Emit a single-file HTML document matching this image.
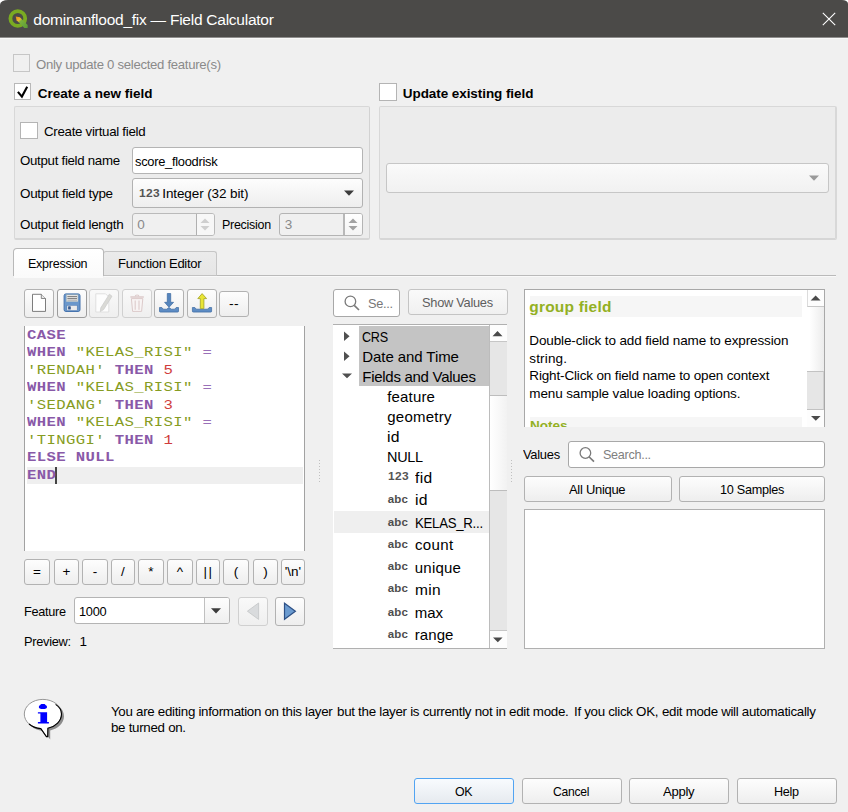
<!DOCTYPE html>
<html>
<head>
<meta charset="utf-8">
<title>Field Calculator</title>
<style>
*{box-sizing:border-box;margin:0;padding:0}
html,body{width:848px;height:812px;overflow:hidden;background:#f0f0f0}
body{font-family:"Liberation Sans",sans-serif;font-size:13px;color:#000;position:relative}
.a{position:absolute}
.t{position:absolute;white-space:pre;line-height:20px;height:20px;transform-origin:0 0}
svg{position:absolute;overflow:visible}
.cb{position:absolute;width:17px;height:17px;background:#fff;border:1px solid #b8b8b8}
.cb.dis{background:#f0f0f0;border-color:#c6c6c6}
.gb{position:absolute;border:1px solid #d8d8d8;border-bottom:2px solid #d6d6d6;border-right-color:#d2d2d2;background:#ececec;border-radius:2px}
.inp{position:absolute;background:#fff;border:1px solid #b4b4b4;border-radius:3px}
.btn{position:absolute;border:1px solid #b2b2b2;border-radius:3px;background:linear-gradient(#fdfdfd,#eeeeee)}
.btn.dis{border-color:#d0d0d0;background:linear-gradient(#f9f9f9,#efefef)}
.hl{position:absolute;background:#c4c4c4}
.code{position:absolute;left:26.6px;white-space:pre;font-family:"Liberation Mono",monospace;font-size:12.5px;line-height:18px;height:18px;letter-spacing:0.3px;transform:scaleX(1.25);transform-origin:0 0}
.op{text-align:center;line-height:24px;font-size:13.5px}
</style>
</head>
<body>
<!-- title bar -->
<div class="a" style="left:0;top:0;width:848px;height:12px;background:#fff"></div>
<div class="a" style="left:0;top:37px;width:848px;height:2px;background:linear-gradient(#8f8e8d 0,#8f8e8d 1px,#f8f8f8 1px,#f8f8f8 2px)"></div>
<div class="a" style="left:0;top:0;width:848px;height:37px;background:#4b4a48;border-radius:8px 6px 0 0 / 4.5px 3.5px 0 0"></div>
<svg style="left:0;top:0" width="848" height="38" viewBox="0 0 848 38">
  <defs><linearGradient id="pen" x1="0" y1="0" x2="1" y2="1"><stop offset="0" stop-color="#f08a1c"/><stop offset="0.3" stop-color="#e8b830"/><stop offset="0.42" stop-color="#7ab03c"/><stop offset="1" stop-color="#5a9a38"/></linearGradient></defs>
  <circle cx="17.8" cy="18.5" r="7.4" fill="none" stroke="#7aab22" stroke-width="3.8"/>
  <path d="M15.7 16.5 L19.9 17.3 L27.6 25 V27.9 H24.4 L16.6 20.3 Z" fill="url(#pen)"/>
  <path d="M822.8 12.8 L835.2 25.2 M835.2 12.8 L822.8 25.2" stroke="#fff" stroke-width="1.1" fill="none"/>
</svg>

<!-- top checkboxes -->
<div class="cb dis" style="left:13px;top:54px;height:18px"></div>
<div class="cb" style="left:14px;top:83px"></div>
<svg style="left:14px;top:84px" width="17" height="17" viewBox="0 0 17 17"><path d="M3.9 7.9 L7.9 12.6 L13.2 2.8" fill="none" stroke="#000" stroke-width="2.1" stroke-linejoin="miter"/></svg>
<div class="cb" style="left:379px;top:83px;width:18px;height:18px;border-color:#b4b4b4"></div>

<!-- group boxes -->
<div class="gb" style="left:14px;top:106px;width:356px;height:134px"></div>
<div class="gb" style="left:379px;top:106px;width:458px;height:134px;border-right:2px solid #d8d8d8"></div>

<div class="cb" style="left:20px;top:122px;width:18px;height:17px;border-color:#b4b4b4"></div>

<div class="inp" style="left:132px;top:147px;width:231px;height:27px"></div>
<div class="btn" style="left:132px;top:178px;width:231px;height:30px"></div>
<svg style="left:344px;top:190px" width="10" height="6" viewBox="0 0 10 6"><path d="M0 0.5 H10 L5 5.7 Z" fill="#3c3c3c"/></svg>

<!-- spin boxes -->
<div class="inp" style="left:132px;top:213px;width:83px;height:23px;background:#f0f0f0;border-color:#bababa"></div>
<div class="a" style="left:196px;top:214px;width:18px;height:21px;background:#f7f7f7;border-left:1px solid #b0b0b0;border-radius:0 2px 2px 0"></div>
<svg style="left:200px;top:218px" width="10" height="13" viewBox="0 0 10 13"><path d="M0.5 5 L5 0.6 L9.5 5 Z M0.5 8 L9.5 8 L5 12.4 Z" fill="#cfcfcf"/></svg>
<div class="inp" style="left:279px;top:213px;width:84px;height:23px;background:#f0f0f0;border-color:#b4b4b4"></div>
<div class="a" style="left:343px;top:214px;width:19px;height:21px;background:linear-gradient(#fff,#f4f4f4);border-left:2px solid #b8b8b8;border-radius:0 2px 2px 0"></div>
<svg style="left:348px;top:218px" width="10" height="13" viewBox="0 0 10 13"><path d="M0.5 5 L5 0.6 L9.5 5 Z M0.5 8 L9.5 8 L5 12.4 Z" fill="#a2a2a2"/></svg>

<!-- right group combobox -->
<div class="btn" style="left:386px;top:163px;width:443px;height:30px;border-color:#c6c6c6;background:linear-gradient(#fafafa,#f1f1f1)"></div>
<svg style="left:809px;top:175px" width="10" height="6" viewBox="0 0 10 6"><path d="M0 0.5 H10 L5 5.7 Z" fill="#9a9a9a"/></svg>

<!-- tabs -->
<div class="a" style="left:14px;top:275px;width:822px;height:1px;background:#bababa"></div>
<div class="a" style="left:104px;top:276px;width:732px;height:1px;background:#f9f9f9"></div>
<div class="a" style="left:103px;top:251px;width:114px;height:25px;background:linear-gradient(#ebebeb,#e6e6e6);border:1px solid #c6c6c6;border-bottom-color:#c2c2c2;border-radius:3px 3px 0 0"></div>
<div class="a" style="left:13px;top:248px;width:91px;height:30px;background:linear-gradient(#ffffff,#fafafa);border:1px solid #b8b8b8;border-bottom:none;border-radius:4px 4px 0 0"></div>
<div class="a" style="left:13px;top:276px;width:1px;height:2px;background:#f0f0f0"></div>
<div class="a" style="left:103px;top:276px;width:1px;height:2px;background:#f0f0f0"></div>

<!-- toolbar -->
<div class="btn" style="left:24px;top:289px;width:30px;height:29px"></div>
<div class="btn" style="left:57px;top:289px;width:30px;height:29px;border-color:#9c9c9c"></div>
<div class="btn dis" style="left:89px;top:289px;width:30px;height:29px"></div>
<div class="btn dis" style="left:122px;top:289px;width:30px;height:29px"></div>
<div class="btn" style="left:154px;top:289px;width:30px;height:29px"></div>
<div class="btn" style="left:187px;top:289px;width:30px;height:29px"></div>
<div class="btn" style="left:219px;top:291px;width:30px;height:26px"></div>
<svg style="left:24px;top:289px" width="230" height="30" viewBox="24 289 230 30">
  <!-- new page -->
  <path d="M32.5 294.3 H41.3 L45.5 298.5 V311.4 H32.5 Z" fill="#fff" stroke="#6e6e6e" stroke-width="0.9"/>
  <path d="M41.3 294.3 V298.5 H45.5" fill="#e8e8e8" stroke="#6e6e6e" stroke-width="0.8"/>
  <!-- save -->
  <rect x="64.1" y="293.9" width="15.9" height="17.6" rx="1.8" fill="#6a97cb" stroke="#4573ae" stroke-width="1"/>
  <rect x="66.3" y="294.8" width="11.7" height="6.9" fill="#e4e4e4" stroke="#9aa" stroke-width="0.4"/>
  <path d="M67.4 296.6 H77 M67.4 298.6 H77" stroke="#6e6e6e" stroke-width="0.9"/>
  <path d="M67.4 300.3 H77" stroke="#a0a0a0" stroke-width="0.7"/>
  <rect x="66.9" y="305.3" width="10.3" height="5.3" fill="#ebebeb" stroke="#4573ae" stroke-width="0.5"/>
  <rect x="68.1" y="306.3" width="2.7" height="3.3" rx="0.6" fill="#37598f"/>
  <!-- edit (disabled) -->
  <path d="M95.8 293.8 H105.6 L108.8 297 V312 H95.8 Z" fill="#fdfdfd" stroke="#dedede" stroke-width="0.9"/>
  <path d="M109.4 294.2 L112 296.2 L103.6 309.6 L100.3 311.6 L100.8 307.8 Z" fill="#dadad6" stroke="#cacaca" stroke-width="0.7"/>
  <!-- trash (disabled) -->
  <path d="M131.4 298.6 H142.8 L141.6 311.4 H132.6 Z" fill="#f8f4f4" stroke="#dccaca" stroke-width="1"/>
  <path d="M130.4 297 H143.8" fill="none" stroke="#dccaca" stroke-width="1.5"/>
  <path d="M135.2 296.4 C135.4 294.6 138.8 294.6 139 296.4" fill="none" stroke="#dccaca" stroke-width="1.1"/>
  <path d="M135.2 300.4 V309.8 M139 300.4 V309.8" stroke="#dccaca" stroke-width="1.1"/>
  <!-- download -->
  <path d="M167.3 293.5 H170.7 V302.3 H173.6 L169 307.3 L164.6 302.3 H167.3 Z" fill="#5585bd" stroke="#3b68a0" stroke-width="0.7"/>
  <path d="M159.5 307.5 H161.8 L163.4 309.2 H166.6 L169 307.6 L171.4 309.2 H174.6 L176.2 307.5 H178.5 V311.2 Q178.5 312.1 177.6 312.1 H160.4 Q159.5 312.1 159.5 311.2 Z" fill="#5d8cc4" stroke="#3b68a0" stroke-width="0.7"/>
  <path d="M167.3 302.3 H170.7 L169 307 Z" fill="#5585bd"/>
  <!-- upload -->
  <path d="M192.4 307.5 H194.8 L196.4 309.2 H207.6 L209.2 307.5 H211.6 V311.2 Q211.6 312.1 210.7 312.1 H193.3 Q192.4 312.1 192.4 311.2 Z" fill="#5d8cc4" stroke="#3b68a0" stroke-width="0.7"/>
  <path d="M200.3 308.6 H203.9 V298.6 H206.6 L202.1 293.6 L197.8 298.6 H200.3 Z" fill="#e9e534" stroke="#a2a224" stroke-width="0.8"/>
</svg>

<!-- editor -->
<div class="a" style="left:24px;top:326px;width:281px;height:225px;background:#fff;border-left:1px solid #a2a2a2;border-right:1px solid #a2a2a2"></div>
<div class="a" style="left:27px;top:467px;width:276px;height:17px;background:#efefef"></div>
<div class="a" style="left:55px;top:467px;width:2px;height:17px;background:#444"></div>
<div class="code" style="top:326.87px"><b style="color:#8959a8">CASE</b></div>
<div class="code" style="top:344.37px"><b style="color:#8959a8">WHEN</b> <span style="color:#869c22">&quot;KELAS_RISI&quot;</span> <span style="color:#9a70b8">=</span></div>
<div class="code" style="top:361.87px"><span style="color:#869c22">'RENDAH'</span> <b style="color:#8959a8">THEN</b> <span style="color:#cf3c3c">5</span></div>
<div class="code" style="top:379.37px"><b style="color:#8959a8">WHEN</b> <span style="color:#869c22">&quot;KELAS_RISI&quot;</span> <span style="color:#9a70b8">=</span></div>
<div class="code" style="top:396.87px"><span style="color:#869c22">'SEDANG'</span> <b style="color:#8959a8">THEN</b> <span style="color:#cf3c3c">3</span></div>
<div class="code" style="top:414.37px"><b style="color:#8959a8">WHEN</b> <span style="color:#869c22">&quot;KELAS_RISI&quot;</span> <span style="color:#9a70b8">=</span></div>
<div class="code" style="top:431.87px"><span style="color:#869c22">'TINGGI'</span> <b style="color:#8959a8">THEN</b> <span style="color:#cf3c3c">1</span></div>
<div class="code" style="top:449.37px"><b style="color:#8959a8">ELSE</b> <b style="color:#8959a8">NULL</b></div>
<div class="code" style="top:466.87px"><b style="color:#8959a8">END</b></div>
<div class="btn op" style="left:24px;top:559px;width:26px;height:26px">=</div>
<div class="btn op" style="left:54px;top:559px;width:25px;height:26px">+</div>
<div class="btn op" style="left:82px;top:559px;width:26px;height:26px">-</div>
<div class="btn op" style="left:111px;top:559px;width:24px;height:26px">/</div>
<div class="btn op" style="left:138px;top:559px;width:26px;height:26px">*</div>
<div class="btn op" style="left:167px;top:559px;width:26px;height:26px">^</div>
<div class="btn op" style="left:196px;top:559px;width:24px;height:26px;letter-spacing:1.6px;padding-left:1px">||</div>
<div class="btn op" style="left:223px;top:559px;width:26px;height:26px">(</div>
<div class="btn op" style="left:253px;top:559px;width:25px;height:26px">)</div>
<div class="btn op" style="left:281px;top:559px;width:24px;height:26px">'\n'</div>
<!-- feature row -->
<div class="inp" style="left:74px;top:597px;width:156px;height:27px"></div>
<div class="a" style="left:204px;top:598px;width:25px;height:25px;background:linear-gradient(#fdfdfd,#efefef);border-left:1px solid #c0c0c0;border-radius:0 2px 2px 0"></div>
<svg style="left:211px;top:608px" width="10" height="6" viewBox="0 0 10 6"><path d="M0 0.3 H10 L5 5.6 Z" fill="#3c3c3c"/></svg>
<div class="btn dis" style="left:238px;top:597px;width:30px;height:29px"></div>
<div class="btn" style="left:275px;top:597px;width:30px;height:29px"></div>
<svg style="left:238px;top:597px" width="70" height="30" viewBox="238 597 70 30">
  <path d="M258.6 603 V619.4 L247.4 611.2 Z" fill="#d9dbdd" stroke="#c6c8ca" stroke-width="0.9"/>
  <path d="M284.5 603.2 V619.2 L295.4 611.2 Z" fill="#6b9bd0" stroke="#2d5086" stroke-width="1.2" stroke-linejoin="miter"/>
</svg>

<!-- middle: search + tree -->
<div class="inp" style="left:333px;top:289px;width:67px;height:28px;border-color:#a8a8a8"></div>
<svg style="left:340px;top:292px" width="24" height="22" viewBox="340 292 24 22"><circle cx="350.4" cy="301.4" r="5.3" fill="none" stroke="#7a7a7a" stroke-width="1.3"/><path d="M354.2 305.4 L359 310" stroke="#7a7a7a" stroke-width="1.7" fill="none"/></svg>
<div class="btn" style="left:408px;top:289px;width:100px;height:26px;border-color:#c4c4c4;background:linear-gradient(#fafafa,#f0f0f0)"></div>
<div class="a" style="left:333px;top:324px;width:174px;height:325px;background:#fff;border-top:1px solid #b0b0b0;border-bottom:1px solid #b0b0b0"></div>
<div class="hl" style="left:359px;top:326px;width:131px;height:60px"></div>
<div class="a" style="left:334px;top:511px;width:156px;height:22px;background:#efefef"></div>
<svg style="left:333px;top:325px" width="30" height="70" viewBox="333 325 30 70">
  <path d="M344 331.4 L349.6 336.2 L344 341 Z M344 351.4 L349.6 356.2 L344 361 Z M342 373.4 H352 L347 378.2 Z" fill="#505050"/>
</svg>
<!-- tree scrollbar -->
<div class="a" style="left:489px;top:325px;width:18px;height:323px;background:#e6e6e6;border-left:1px solid #bcbcbc"></div>
<div class="a" style="left:490px;top:325px;width:17px;height:17px;background:#fdfdfd;border-bottom:1px solid #c6c6c6"></div>
<div class="a" style="left:490px;top:395px;width:17px;height:96px;background:linear-gradient(90deg,#ffffff,#f2f2f2);border-top:1px solid #bdbdbd;border-bottom:1px solid #bdbdbd"></div>
<div class="a" style="left:490px;top:630px;width:17px;height:18px;background:#fdfdfd;border-top:1px solid #c6c6c6"></div>
<svg style="left:490px;top:325px" width="17" height="323" viewBox="490 325 17 323">
  <path d="M492.5 336.2 L497.5 331 L502.5 336.2 Z M493 637.4 H502.6 L497.8 642.2 Z" fill="#4a4a4a"/>
</svg>
<!-- splitter dots -->
<svg style="left:316px;top:458px" width="200" height="26" viewBox="316 458 200 26">
  <path d="M319.5 460 V482 M511.5 460 V482" stroke="#c0c0c0" stroke-width="1" stroke-dasharray="1 2"/>
</svg>

<!-- help panel -->
<div class="a" style="left:524px;top:289px;width:301px;height:138px;background:#fff;border:1px solid #a8a8a8;border-bottom:none;overflow:hidden">
  <div class="a" style="left:5px;top:6px;width:272px;height:21px;background:#f6f6f6"></div>
  <div class="a" style="left:5px;top:127px;width:272px;height:21px;background:#f6f6f6"></div>
  <div class="t" style="left:5px;top:126px;font-weight:bold;color:#93b023;font-size:13.5px">Notes</div>
  <div class="a" style="left:282px;top:0;width:17px;height:17px;background:#fdfdfd;border-left:1px solid #dcdcdc;border-bottom:1px solid #c8c8c8"></div>
  <div class="a" style="left:282px;top:17px;width:17px;height:64px;background:linear-gradient(90deg,#ffffff 15%,#ececec)"></div>
  <div class="a" style="left:282px;top:81px;width:17px;height:39px;background:#e6e6e6;border-top:1px solid #c2c2c2;border-bottom:1px solid #c2c2c2;border-right:1px solid #d0d0d0"></div>
  <div class="a" style="left:282px;top:120px;width:17px;height:18px;background:#fdfdfd"></div>
</div>
<svg style="left:807px;top:290px" width="17" height="137" viewBox="807 290 17 137">
  <path d="M810.6 300.6 L815.6 295.4 L820.6 300.6 Z M811 416 H820.6 L815.8 420.8 Z" fill="#4a4a4a"/>
</svg>
<!-- values -->
<div class="inp" style="left:568px;top:441px;width:257px;height:27px;border-color:#a8a8a8"></div>
<svg style="left:575px;top:444px" width="24" height="22" viewBox="575 444 24 22"><circle cx="585.4" cy="453" r="5.3" fill="none" stroke="#7a7a7a" stroke-width="1.3"/><path d="M589.2 457 L594 461.6" stroke="#7a7a7a" stroke-width="1.7" fill="none"/></svg>
<div class="btn" style="left:524px;top:476px;width:148px;height:26px"></div>
<div class="btn" style="left:679px;top:476px;width:146px;height:26px"></div>
<div class="a" style="left:524px;top:509px;width:301px;height:140px;background:#fff;border:1px solid #b0b0b0"></div>

<!-- info icon -->
<svg style="left:20px;top:696px" width="50" height="46" viewBox="20 696 50 46">
  <path d="M45.2 701.4 C55.6 701.4 64 708 64 716.2 C64 723 58.2 728.6 50.2 730.4 V739.4 L43.8 731 C33.6 730.4 26.8 724 26.8 716.2 C26.8 708 35 701.4 45.2 701.4 Z" fill="#8c8c8c"/>
  <path d="M42.9 699.4 C53.2 699.4 61.5 705.9 61.5 714 C61.5 720.9 55.8 726.4 47.9 728.3 L47.7 736.6 H46.4 L40.8 728.6 C31.2 727.8 24.3 721.6 24.3 714 C24.3 705.9 32.6 699.4 42.9 699.4 Z" fill="#fff" stroke="#8c8c8c" stroke-width="0.9"/>
  <path d="M55.6 704.4 C59.2 706.8 61.5 710.2 61.5 714 C61.5 720.9 55.8 726.4 47.9 728.3 L47.7 736.6 H46.4 L40.8 728.6 C36 728.2 32 726.6 29 724" fill="none" stroke="#000" stroke-width="1.1"/>
  <ellipse cx="42.9" cy="706.9" rx="4.1" ry="2.1" fill="#0000ff"/>
  <rect x="40.4" y="704.1" width="5" height="3" rx="1.2" fill="#0000ff"/>
  <path d="M37.9 712.2 H47.1 V722 H48.9 V723.4 H37.9 V722 H40.4 V713.6 H37.9 Z" fill="#0000ff"/>
</svg>
<!-- dialog buttons -->
<div class="btn" style="left:414px;top:778px;width:100px;height:26px;border-color:#52a4f2;background:linear-gradient(#f8fbfe,#e6eaef)"></div>
<div class="btn" style="left:522px;top:778px;width:100px;height:26px"></div>
<div class="btn" style="left:629px;top:778px;width:100px;height:26px"></div>
<div class="btn" style="left:737px;top:778px;width:100px;height:26px"></div>

<div class="t" style="left:33.30px;top:10.00px;font-size:15.5px;color:#fff;letter-spacing:-0.247px;">dominanflood_fix — Field Calculator</div>
<div class="t" style="left:36.30px;top:55.00px;font-size:13.5px;color:#8a8a8a;letter-spacing:-0.300px;transform:scaleX(0.9741);">Only update 0 selected feature(s)</div>
<div class="t" style="left:37.80px;top:84.00px;font-size:13.5px;font-weight:bold;letter-spacing:-0.012px;">Create a new field</div>
<div class="t" style="left:402.80px;top:84.00px;font-size:13.5px;font-weight:bold;letter-spacing:-0.072px;">Update existing field</div>
<div class="t" style="left:43.80px;top:122.00px;font-size:13.5px;letter-spacing:-0.300px;transform:scaleX(0.9853);">Create virtual field</div>
<div class="t" style="left:19.80px;top:151.00px;font-size:13.5px;letter-spacing:-0.300px;transform:scaleX(0.9835);">Output field name</div>
<div class="t" style="left:135.30px;top:151.70px;font-size:13.5px;letter-spacing:-0.300px;transform:scaleX(0.9538);">score_floodrisk</div>
<div class="t" style="left:19.80px;top:184.00px;font-size:13.5px;letter-spacing:-0.300px;transform:scaleX(0.9956);">Output field type</div>
<div class="t" style="left:138.80px;top:182.70px;font-size:11.5px;font-weight:bold;color:#555;letter-spacing:0.300px;transform:scaleX(1.0411);">123</div>
<div class="t" style="left:162.30px;top:184.00px;font-size:13.5px;letter-spacing:-0.113px;">Integer (32 bit)</div>
<div class="t" style="left:19.80px;top:215.00px;font-size:13.5px;letter-spacing:-0.300px;transform:scaleX(0.9945);">Output field length</div>
<div class="t" style="left:137.30px;top:215.00px;font-size:13.5px;color:#8a8a8a;">0</div>
<div class="t" style="left:222.30px;top:215.00px;font-size:13.5px;letter-spacing:-0.300px;transform:scaleX(0.9241);">Precision</div>
<div class="t" style="left:284.80px;top:215.00px;font-size:13.5px;color:#8a8a8a;">3</div>
<div class="t" style="left:27.80px;top:253.50px;font-size:13.5px;letter-spacing:-0.300px;transform:scaleX(0.9298);">Expression</div>
<div class="t" style="left:117.80px;top:254.00px;font-size:13.5px;letter-spacing:-0.300px;transform:scaleX(0.9654);">Function Editor</div>
<div class="t" style="left:229.30px;top:294.00px;font-size:13.5px;letter-spacing:0.300px;transform:scaleX(1.0323);">--</div>
<div class="t" style="left:23.80px;top:601.80px;font-size:13.5px;letter-spacing:-0.300px;transform:scaleX(0.9412);">Feature</div>
<div class="t" style="left:78.80px;top:601.80px;font-size:13.5px;letter-spacing:-0.300px;transform:scaleX(0.9469);">1000</div>
<div class="t" style="left:23.80px;top:631.60px;font-size:13.5px;letter-spacing:-0.300px;transform:scaleX(0.9483);">Preview:</div>
<div class="t" style="left:79.50px;top:631.60px;font-size:13.5px;">1</div>
<div class="t" style="left:368.30px;top:293.50px;font-size:13.5px;color:#777;letter-spacing:-0.300px;transform:scaleX(0.9448);">Se...</div>
<div class="t" style="left:421.80px;top:293.00px;font-size:13.5px;color:#5e5e5e;letter-spacing:-0.300px;transform:scaleX(0.9506);">Show Values</div>
<div class="t" style="left:362.30px;top:326.50px;font-size:15px;letter-spacing:-0.300px;transform:scaleX(0.8400);">CRS</div>
<div class="t" style="left:362.30px;top:346.50px;font-size:15px;letter-spacing:-0.080px;">Date and Time</div>
<div class="t" style="left:362.30px;top:366.50px;font-size:15px;letter-spacing:-0.283px;">Fields and Values</div>
<div class="t" style="left:387.30px;top:386.50px;font-size:15px;letter-spacing:0.149px;">feature</div>
<div class="t" style="left:387.30px;top:406.50px;font-size:15px;letter-spacing:0.224px;">geometry</div>
<div class="t" style="left:387.30px;top:426.50px;font-size:15px;letter-spacing:0.300px;transform:scaleX(1.0511);">id</div>
<div class="t" style="left:387.30px;top:447.00px;font-size:15px;letter-spacing:-0.300px;transform:scaleX(0.9637);">NULL</div>
<div class="t" style="left:387.80px;top:466.20px;font-size:11.3px;font-weight:bold;color:#555;letter-spacing:0.300px;transform:scaleX(1.0586);">123</div>
<div class="t" style="left:414.80px;top:468.00px;font-size:15px;letter-spacing:0.300px;transform:scaleX(1.0399);">fid</div>
<div class="t" style="left:387.80px;top:488.50px;font-size:11.5px;font-weight:bold;color:#4e4e4e;letter-spacing:0.136px;">abc</div>
<div class="t" style="left:414.80px;top:490.00px;font-size:15px;letter-spacing:0.300px;transform:scaleX(1.0511);">id</div>
<div class="t" style="left:387.80px;top:511.50px;font-size:11.5px;font-weight:bold;color:#4e4e4e;letter-spacing:0.136px;">abc</div>
<div class="t" style="left:414.80px;top:513.00px;font-size:15px;letter-spacing:-0.300px;transform:scaleX(0.8804);">KELAS_R...</div>
<div class="t" style="left:387.80px;top:533.50px;font-size:11.5px;font-weight:bold;color:#4e4e4e;letter-spacing:0.136px;">abc</div>
<div class="t" style="left:414.80px;top:535.00px;font-size:15px;letter-spacing:0.300px;transform:scaleX(1.0052);">count</div>
<div class="t" style="left:387.80px;top:556.00px;font-size:11.5px;font-weight:bold;color:#4e4e4e;letter-spacing:0.136px;">abc</div>
<div class="t" style="left:414.80px;top:557.50px;font-size:15px;letter-spacing:0.211px;">unique</div>
<div class="t" style="left:387.80px;top:578.00px;font-size:11.5px;font-weight:bold;color:#4e4e4e;letter-spacing:0.136px;">abc</div>
<div class="t" style="left:414.80px;top:579.50px;font-size:15px;letter-spacing:0.300px;transform:scaleX(1.0334);">min</div>
<div class="t" style="left:387.80px;top:601.50px;font-size:11.5px;font-weight:bold;color:#4e4e4e;letter-spacing:0.136px;">abc</div>
<div class="t" style="left:414.80px;top:603.00px;font-size:15px;letter-spacing:-0.122px;">max</div>
<div class="t" style="left:387.80px;top:623.50px;font-size:11.5px;font-weight:bold;color:#4e4e4e;letter-spacing:0.136px;">abc</div>
<div class="t" style="left:414.80px;top:625.00px;font-size:15px;letter-spacing:0.056px;">range</div>
<div class="t" style="left:529.30px;top:296.50px;font-size:15.5px;font-weight:bold;color:#93b023;letter-spacing:0.202px;">group field</div>
<div class="t" style="left:529.30px;top:330.50px;font-size:13.5px;letter-spacing:-0.135px;">Double-click to add field name to expression</div>
<div class="t" style="left:529.30px;top:348.50px;font-size:13.5px;letter-spacing:0.156px;">string.</div>
<div class="t" style="left:529.30px;top:365.50px;font-size:13.5px;letter-spacing:-0.151px;">Right-Click on field name to open context</div>
<div class="t" style="left:529.30px;top:383.50px;font-size:13.5px;letter-spacing:-0.130px;">menu sample value loading options.</div>
<div class="t" style="left:523.30px;top:444.50px;font-size:13.5px;letter-spacing:-0.300px;transform:scaleX(0.9566);">Values</div>
<div class="t" style="left:603.30px;top:444.50px;font-size:13.5px;color:#808080;letter-spacing:-0.300px;transform:scaleX(0.9316);">Search...</div>
<div class="t" style="left:569.30px;top:479.50px;font-size:13.5px;letter-spacing:-0.300px;transform:scaleX(0.9618);">All Unique</div>
<div class="t" style="left:720.10px;top:480.00px;font-size:13.5px;letter-spacing:-0.300px;transform:scaleX(0.9374);">10 Samples</div>
<div class="t" style="left:111.30px;top:702.00px;font-size:13.5px;letter-spacing:-0.300px;transform:scaleX(0.9873);">You are editing information on this layer</div>
<div class="t" style="left:337.20px;top:702.00px;font-size:13.5px;letter-spacing:-0.300px;transform:scaleX(0.9906);">but the layer is currently not in edit mode.</div>
<div class="t" style="left:573.90px;top:702.00px;font-size:13.5px;letter-spacing:-0.300px;transform:scaleX(0.9879);">If you click OK,</div>
<div class="t" style="left:661.80px;top:702.00px;font-size:13.5px;letter-spacing:-0.300px;transform:scaleX(0.9851);">edit mode will automatically</div>
<div class="t" style="left:111.30px;top:717.50px;font-size:13.5px;letter-spacing:-0.300px;transform:scaleX(0.9884);">be turned on.</div>
<div class="t" style="left:455.30px;top:781.50px;font-size:13.5px;letter-spacing:-0.300px;transform:scaleX(0.9159);">OK</div>
<div class="t" style="left:553.00px;top:781.50px;font-size:13.5px;letter-spacing:-0.300px;transform:scaleX(0.8981);">Cancel</div>
<div class="t" style="left:663.30px;top:781.50px;font-size:13.5px;letter-spacing:-0.300px;transform:scaleX(0.9699);">Apply</div>
<div class="t" style="left:773.80px;top:781.50px;font-size:13.5px;letter-spacing:-0.300px;transform:scaleX(0.9343);">Help</div>
</body>
</html>
